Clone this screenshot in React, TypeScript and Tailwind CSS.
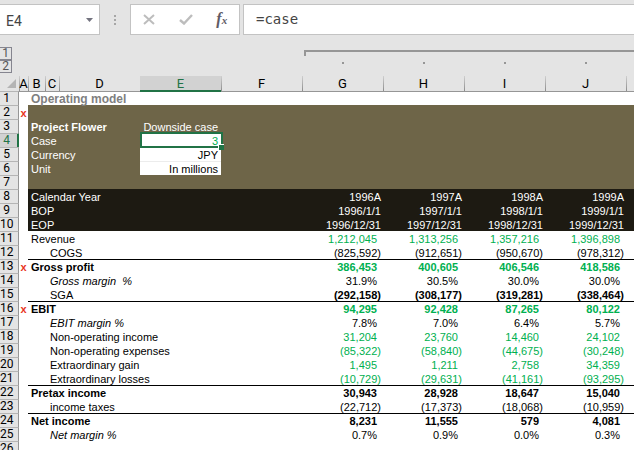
import { clsx } from "clsx";

interface ModelRow {
  label: string;
  values: string[];
  indent?: boolean;
  bold?: boolean;
  boldLabel?: boolean;
  italic?: boolean;
  green?: boolean;
  topLine?: boolean;
  marked?: boolean;
}

const columns = ["A", "B", "C", "D", "E", "F", "G", "H", "I", "J", ""];

const settings = [
  { row: 3, label: "Project Flower", value: "Downside case" },
  { row: 4, label: "Case", value: "3" },
  { row: 5, label: "Currency", value: "JPY" },
  { row: 6, label: "Unit", value: "In millions" },
];

const periods = [
  { row: 8, label: "Calendar Year", values: ["1996A", "1997A", "1998A", "1999A"] },
  { row: 9, label: "BOP", values: ["1996/1/1", "1997/1/1", "1998/1/1", "1999/1/1"] },
  { row: 10, label: "EOP", values: ["1996/12/31", "1997/12/31", "1998/12/31", "1999/12/31"] },
];

const modelRows: ModelRow[] = [
  { label: "Revenue", values: ["1,212,045", "1,313,256", "1,357,216", "1,396,898"], green: true },
  { label: "COGS", values: ["(825,592)", "(912,651)", "(950,670)", "(978,312)"], indent: true },
  { label: "Gross profit", values: ["386,453", "400,605", "406,546", "418,586"], bold: true, boldLabel: true, green: true, topLine: true, marked: true },
  { label: "Gross margin  %", values: ["31.9%", "30.5%", "30.0%", "30.0%"], indent: true, italic: true },
  { label: "SGA", values: ["(292,158)", "(308,177)", "(319,281)", "(338,464)"], indent: true, bold: true },
  { label: "EBIT", values: ["94,295", "92,428", "87,265", "80,122"], bold: true, boldLabel: true, green: true, topLine: true, marked: true },
  { label: "EBIT margin %", values: ["7.8%", "7.0%", "6.4%", "5.7%"], indent: true, italic: true },
  { label: "Non-operating income", values: ["31,204", "23,760", "14,460", "24,102"], indent: true, green: true },
  { label: "Non-operating expenses", values: ["(85,322)", "(58,840)", "(44,675)", "(30,248)"], indent: true, green: true },
  { label: "Extraordinary gain", values: ["1,495", "1,211", "2,758", "34,359"], indent: true, green: true },
  { label: "Extraordinary losses", values: ["(10,729)", "(29,631)", "(41,161)", "(93,295)"], indent: true, green: true },
  { label: "Pretax income", values: ["30,943", "28,928", "18,647", "15,040"], bold: true, boldLabel: true, topLine: true },
  { label: "income taxes", values: ["(22,712)", "(17,373)", "(18,068)", "(10,959)"], indent: true },
  { label: "Net income", values: ["8,231", "11,555", "579", "4,081"], bold: true, boldLabel: true, topLine: true },
  { label: "Net margin %", values: ["0.7%", "0.9%", "0.0%", "0.3%"], indent: true, italic: true },
];

function FormulaBar() {
  return (
    <div className="flex h-[35px] items-stretch pt-1">
      <div className="flex w-[100px] items-center border border-l-0 border-[#c3c3c3] bg-white">
        <input
          aria-label="Name box"
          defaultValue="E4"
          className="min-w-0 flex-1 pt-1 pl-[6px] font-['Roboto',sans-serif] text-[14px] text-[#444] outline-none"
        />
        <button aria-label="Show names" className="flex w-5 justify-center">
          <svg width="7" height="4" viewBox="0 0 7 4">
            <path d="M0 0h7L3.5 4z" fill="#73737f" />
          </svg>
        </button>
      </div>
      <div className="flex w-[30px] items-center justify-center">
        <svg width="2" height="10" viewBox="0 0 2 10" fill="#a6a6a6">
          <path d="M0 0h2v2H0zM0 4h2v2H0zM0 8h2v2H0z" />
        </svg>
      </div>
      <div className="flex w-[110px] items-center justify-around border border-[#c3c3c3] bg-white">
        <button aria-label="Cancel">
          <svg width="12" height="11" viewBox="0 0 12 11" fill="none" stroke="#bdbdbd" strokeWidth="2">
            <path d="M1 1l10 9M11 1L1 10" />
          </svg>
        </button>
        <button aria-label="Enter">
          <svg width="14" height="11" viewBox="0 0 14 11" fill="none" stroke="#bdbdbd" strokeWidth="2.4">
            <path d="M1 6l4 3.5L13 1" />
          </svg>
        </button>
        <button
          aria-label="Insert function"
          className="font-['Liberation_Serif',serif] text-[16px] leading-4 font-bold text-[#5f5b66] italic"
        >
          f<span className="text-[11px]">x</span>
        </button>
      </div>
      <input
        aria-label="Formula"
        defaultValue="=case"
        className="ml-[3px] min-w-0 flex-1 border border-r-0 border-[#c3c3c3] bg-white pl-3 font-['DejaVu_Sans_Mono',monospace] text-[14px] text-[#444] outline-none"
      />
    </div>
  );
}

function OutlineBar() {
  return (
    <div className="flex h-[41px]">
      <div className="w-[304px] pt-3 font-['Liberation_Sans_Narrow','Roboto',sans-serif] text-[12px] text-[#555]">
        {["1", "2"].map((level) => (
          <button
            key={level}
            aria-label={`Outline level ${level}`}
            className="block h-[13px] w-3 border border-l-0 border-[#85858f] leading-[11px]"
          >
            {level}
          </button>
        ))}
      </div>
      <div className="flex-1 pt-[15px]">
        <div className="h-[6px] border-t-2 border-l-2 border-[#969696]" />
        <div className="flex pt-[6px]">
          {["G", "H", "I", "J"].map((col) => (
            <div key={col} className="flex w-[81px] shrink-0 pl-[38px]">
              <span className="size-[2px] bg-[#969696]" />
            </div>
          ))}
        </div>
      </div>
    </div>
  );
}

function RowNumber({ n, active }: { n: number; active?: boolean }) {
  return (
    <th
      scope="row"
      className={clsx(
        "border-t border-r border-t-[#b5b5b5] p-0 pr-[5px] text-center font-['Liberation_Sans_Narrow','Roboto',sans-serif] text-[12px] leading-[13px] font-normal",
        active
          ? "border-r-[#217346] bg-[#d2d2d2] text-[#217346] shadow-[inset_-1px_0_0_#217346]"
          : "border-r-[#969696] bg-[#e4e4e4] text-black",
      )}
    >
      {n}
    </th>
  );
}

function Mark({ show }: { show?: boolean }) {
  return (
    <td className="bg-white p-0 text-center font-bold text-[#e8341c]">{show ? "x" : ""}</td>
  );
}

function SelectedCell({ value }: { value: string }) {
  return (
    <td className="relative bg-white p-0 pr-[3px] text-right text-[#00b050]">
      {value}
      <span className="absolute -inset-y-px -right-[2px] left-0 border-2 border-[#217346]" />
      <span className="absolute -right-[3px] -bottom-[3px] size-[6px] border-t border-l border-white bg-[#217346]" />
    </td>
  );
}

function ModelLine({ row, n }: { row: ModelRow; n: number }) {
  const line = row.topLine ? "border-t border-black" : "border-t border-transparent";
  return (
    <tr className="h-[14px]">
      <RowNumber n={n} />
      <Mark show={row.marked} />
      <td
        colSpan={3}
        className={clsx(
          "p-0 whitespace-pre",
          line,
          row.indent ? "pl-[22px]" : "pl-[3px]",
          row.boldLabel && "font-bold",
          row.italic && "italic",
        )}
      >
        {row.label}
      </td>
      <td className={clsx("p-0", line)} />
      <td className={clsx("p-0", line)} />
      {row.values.map((value, i) => (
        <td
          key={i}
          className={clsx(
            "p-0 text-right",
            line,
            value.startsWith("(") ? "pr-[2px]" : "pr-[6px]",
            row.bold && "font-bold",
            row.green && "text-[#00b050]",
          )}
        >
          {value}
        </td>
      ))}
      <td className={clsx("p-0", line)} />
    </tr>
  );
}

function Sheet() {
  return (
    <table className="w-full table-fixed border-separate border-spacing-0 bg-white font-['Liberation_Sans',sans-serif] text-[11px] leading-[12px] text-black [&_td]:pt-px [&_td]:align-bottom">
      <colgroup>
        <col className="w-[19px]" />
        <col className="w-[9px]" />
        <col className="w-[17px]" />
        <col className="w-[14px]" />
        <col className="w-[81px]" />
        <col className="w-[81px]" />
        <col className="w-[81px]" />
        <col className="w-[81px]" />
        <col className="w-[81px]" />
        <col className="w-[81px]" />
        <col className="w-[81px]" />
        <col />
      </colgroup>
      <thead>
        <tr className="h-[15px] bg-[#e4e4e4] font-['Liberation_Sans_Narrow','Roboto',sans-serif] text-[13px]">
          <th className="p-0" aria-label="Select all">
            <svg width="9" height="9" viewBox="0 0 9 9" className="ml-[7px]">
              <path d="M9 0v9H0z" fill="#b4b4b4" />
            </svg>
          </th>
          {columns.map((col) => (
            <th
              key={col}
              scope="col"
              className={clsx(
                "p-0 text-center leading-[15px] font-normal",
                col === "E"
                  ? "bg-[#d2d2d2] text-[#217346] shadow-[inset_0_-1px_0_#217346]"
                  : "bg-[linear-gradient(#cfcfcf,#8c8c8c)] bg-[length:1px_100%] bg-left bg-no-repeat",
              )}
            >
              {col}
            </th>
          ))}
        </tr>
      </thead>
      <tbody>
        <tr className="h-[14px]">
          <RowNumber n={1} />
          <td className="border-t border-[#969696] p-0" />
          <td colSpan={3} className="border-t border-[#969696] p-0 pl-[3px] text-[12px] font-bold text-[#7f7f7f]">
            Operating model
          </td>
          <td className="border-t border-[#217346] p-0" />
          <td colSpan={6} className="border-t border-[#969696] p-0" />
        </tr>
        <tr className="h-[14px]">
          <RowNumber n={2} />
          <Mark show />
          <td colSpan={10} className="bg-[#6e6548] p-0" />
        </tr>
        {settings.map(({ row, label, value }) => (
          <tr key={row} className="h-[14px] bg-[#6e6548] text-white">
            <RowNumber n={row} active={row === 4} />
            <Mark />
            <td colSpan={3} className={clsx("p-0 pl-[3px]", row === 3 && "font-bold")}>
              {label}
            </td>
            {row === 4 ? (
              <SelectedCell value={value} />
            ) : (
              <td
                className={clsx(
                  "p-0 pr-[3px] text-right",
                  row > 4 && "border-t border-[#ececec] bg-white text-black",
                )}
              >
                {value}
              </td>
            )}
            <td colSpan={6} className="p-0" />
          </tr>
        ))}
        <tr className="h-[14px]">
          <RowNumber n={7} />
          <Mark />
          <td colSpan={10} className="bg-[#6e6548] p-0" />
        </tr>
        {periods.map(({ row, label, values }) => (
          <tr key={row} className="h-[14px] bg-[#1d1a12] text-white">
            <RowNumber n={row} />
            <Mark />
            <td colSpan={5} className="p-0 pl-[3px]">
              {label}
            </td>
            {values.map((value) => (
              <td key={value} className="p-0 pr-[2px] text-right">
                {value}
              </td>
            ))}
            <td className="p-0" />
          </tr>
        ))}
        {modelRows.map((row, i) => (
          <ModelLine key={row.label} row={row} n={i + 11} />
        ))}
        <tr className="h-[14px]">
          <RowNumber n={26} />
          <td colSpan={11} className="p-0" />
        </tr>
      </tbody>
    </table>
  );
}

export default function App() {
  return (
    <main className="h-screen overflow-hidden bg-[#e4e4e4]">
      <FormulaBar />
      <OutlineBar />
      <Sheet />
    </main>
  );
}
